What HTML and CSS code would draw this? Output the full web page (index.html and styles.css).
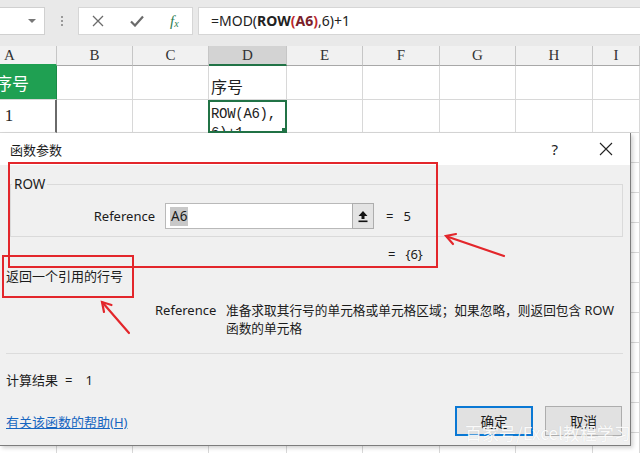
FILE: index.html
```html
<!DOCTYPE html>
<html lang="zh">
<head>
<meta charset="utf-8">
<title>函数参数</title>
<link rel="stylesheet" href="styles.css">
</head>
<body>
<div class="app">
  <header class="toolbar">
    <div class="namebox"><span class="caret"></span></div>
    <div class="grip"><i></i><i></i><i></i></div>
    <div class="fxbox">
      <svg class="ic-x" width="12" height="12" viewBox="0 0 12 12"><path d="M1 1L11 11M11 1L1 11" stroke="#6b6b6b" stroke-width="1.3" fill="none"/></svg>
      <svg class="ic-ok" width="14" height="12" viewBox="0 0 14 12"><path d="M1 6.5L5 10.5L13 1.5" stroke="#6b6b6b" stroke-width="2.2" fill="none"/></svg>
      <span class="fx">f<sub>x</sub></span>
    </div>
    <div class="formula">=MOD(<b>ROW</b><b class="paren">(</b><b class="ref">A6</b><b class="paren">)</b>,6)+1</div>
  </header>

  <div class="sheet">
    <div class="hd c-a">A</div><div class="hd">B</div><div class="hd">C</div><div class="hd hd-sel">D</div><div class="hd">E</div><div class="hd">F</div><div class="hd">G</div><div class="hd">H</div><div class="hd">I</div>

    <div class="cell r1 green"><span class="shift">序号</span></div><div class="cell r1"></div><div class="cell r1"></div><div class="cell r1 dtext1">序号</div><div class="cell r1"></div><div class="cell r1"></div><div class="cell r1"></div><div class="cell r1"></div><div class="cell r1"></div>

    <div class="cell r2 num">1</div><div class="cell r2"></div><div class="cell r2"></div><div class="cell r2 active"><span class="mono">ROW(A6),<br>6)+1</span><span class="handle"></span></div><div class="cell r2"></div><div class="cell r2"></div><div class="cell r2"></div><div class="cell r2"></div><div class="cell r2"></div>

    <div class="cell"></div><div class="cell"></div><div class="cell"></div><div class="cell"></div><div class="cell"></div><div class="cell"></div><div class="cell"></div><div class="cell"></div><div class="cell"></div>
    <div class="cell"></div><div class="cell"></div><div class="cell"></div><div class="cell"></div><div class="cell"></div><div class="cell"></div><div class="cell"></div><div class="cell"></div><div class="cell"></div>
    <div class="cell"></div><div class="cell"></div><div class="cell"></div><div class="cell"></div><div class="cell"></div><div class="cell"></div><div class="cell"></div><div class="cell"></div><div class="cell"></div>
    <div class="cell"></div><div class="cell"></div><div class="cell"></div><div class="cell"></div><div class="cell"></div><div class="cell"></div><div class="cell"></div><div class="cell"></div><div class="cell"></div>
    <div class="cell"></div><div class="cell"></div><div class="cell"></div><div class="cell"></div><div class="cell"></div><div class="cell"></div><div class="cell"></div><div class="cell"></div><div class="cell"></div>
    <div class="cell"></div><div class="cell"></div><div class="cell"></div><div class="cell"></div><div class="cell"></div><div class="cell"></div><div class="cell"></div><div class="cell"></div><div class="cell"></div>
    <div class="cell"></div><div class="cell"></div><div class="cell"></div><div class="cell"></div><div class="cell"></div><div class="cell"></div><div class="cell"></div><div class="cell"></div><div class="cell"></div>
    <div class="cell"></div><div class="cell"></div><div class="cell"></div><div class="cell"></div><div class="cell"></div><div class="cell"></div><div class="cell"></div><div class="cell"></div><div class="cell"></div>
    <div class="cell"></div><div class="cell"></div><div class="cell"></div><div class="cell"></div><div class="cell"></div><div class="cell"></div><div class="cell"></div><div class="cell"></div><div class="cell"></div>
    <div class="cell"></div><div class="cell"></div><div class="cell"></div><div class="cell"></div><div class="cell"></div><div class="cell"></div><div class="cell"></div><div class="cell"></div><div class="cell"></div>
    <div class="cell"></div><div class="cell"></div><div class="cell"></div><div class="cell"></div><div class="cell"></div><div class="cell"></div><div class="cell"></div><div class="cell"></div><div class="cell"></div>
  </div>

  <div class="dialog">
    <div class="titlebar">
      <span class="title">函数参数</span>
      <span class="help">?</span>
      <svg class="close" width="14" height="14" viewBox="0 0 14 14"><path d="M1 1L13 13M13 1L1 13" stroke="#222" stroke-width="1.1" fill="none"/></svg>
    </div>
    <div class="dbody">
      <fieldset class="group">
        <legend>ROW</legend>
        <div class="argrow">
          <span class="arglabel">Reference</span>
          <div class="input"><span class="sel">A6</span></div>
          <span class="pick"><svg width="12" height="13" viewBox="0 0 12 13"><path d="M6 1L1.5 6H4.5V9H7.5V6H10.5Z" fill="#111"/><rect x="1.5" y="10.5" width="9" height="1.6" fill="#111"/></svg></span>
          <span class="eq">=</span><span class="val">5</span>
        </div>
      </fieldset>
      <div class="resrow"><span class="eq">=</span><span class="val">{6}</span></div>
      <div class="summary">返回一个引用的行号</div>
      <div class="desc">
        <span class="dname">Reference</span>
        <span class="dtext">准备求取其行号的单元格或单元格区域；如果忽略，则返回包含 ROW<br>函数的单元格</span>
      </div>
      <div class="sep"></div>
      <div class="calc"><span>计算结果</span><span class="ceq">=</span><span class="cval">1</span></div>
      <div class="footer">
        <a class="helplink" href="#">有关该函数的帮助(H)</a>
        <div class="btns">
          <span class="btn btn-ok">确定</span>
          <span class="btn">取消</span>
        </div>
      </div>
    </div>
  </div>

  <div class="mark mark1"></div>
  <div class="mark mark2"></div>
  <svg class="arrows" width="640" height="453" viewBox="0 0 640 453">
    <g stroke="#e3262b" stroke-width="2.2" fill="none" stroke-linecap="round">
      <path d="M504 256L447 236.5"/>
      <path d="M453 244L446 236L456 234"/>
      <path d="M129 333L102.5 302.5"/>
      <path d="M104 312L102 302L111.5 305"/>
    </g>
  </svg>
  <div class="watermark">百家号/Excel教程学习</div>
</div>
</body>
</html>
```

FILE: styles.css
```css
* { box-sizing: border-box; }
html, body { margin: 0; padding: 0; }
body {
  width: 640px;
  height: 453px;
  overflow: hidden;
  background: #ffffff;
  font-family: "Noto Sans", "Noto Sans CJK SC", sans-serif;
}
.app {
  position: relative;
  width: 640px;
  height: 453px;
  overflow: hidden;
}

/* toolbar */
.toolbar {
  height: 46px;
  background: #e9e9e9;
  display: flex;
  align-items: flex-start;
  padding-top: 7px;
}
.namebox {
  width: 45px;
  height: 28px;
  background: #fff;
  border: 1px solid #d0d0d0;
  border-left: none;
  display: flex;
  align-items: center;
  justify-content: flex-end;
  padding-right: 8px;
}
.caret {
  width: 0; height: 0;
  border-left: 4px solid transparent;
  border-right: 4px solid transparent;
  border-top: 4px solid #777;
}
.grip {
  width: 33px;
  height: 28px;
  display: flex;
  flex-direction: column;
  align-items: center;
  justify-content: center;
  gap: 2px;
}
.grip i {
  display: block;
  width: 2px; height: 2px;
  background: #9a9a9a;
}
.fxbox {
  width: 115px;
  height: 28px;
  background: #fff;
  border: 1px solid #d6d6d6;
  display: flex;
  align-items: center;
  padding-left: 13px;
}
.ic-x { margin-right: 26px; }
.ic-ok { margin-right: 26px; }
.fx {
  font-family: "Liberation Serif", serif;
  font-style: italic;
  color: #2e7d52;
  font-size: 15px;
}
.fx sub { font-size: 10px; vertical-align: -1px; }
.formula {
  flex: 1;
  height: 28px;
  margin-left: 5px;
  background: #fff;
  border: 1px solid #d6d6d6;
  border-right: none;
  font-size: 14px;
  line-height: 26px;
  padding-left: 12px;
  color: #222;
}
.formula b { font-weight: 700; }
.formula .paren { color: #c0282d; }
.formula .ref { color: #7a1e2a; }

/* sheet */
.sheet {
  display: grid;
  grid-template-columns: 57px 76px 76px 78px 76px 77px 76px 77px 47px;
  grid-template-rows: 20px 34px 33px;
  grid-auto-rows: 30px;
}
.hd {
  background: #f1f1f1;
  border-right: 1px solid #c6c6c6;
  border-bottom: 1px solid #a8a8a8;
  font-family: "Liberation Serif", serif;
  font-size: 15px;
  color: #333;
  text-align: center;
  line-height: 19px;
}
.hd.c-a { padding-right: 37px; border-bottom: 2px solid #1e9f51; }
.hd-sel { background: #d3d3d3; border-bottom: 2px solid #217346; }
.cell {
  border-right: 1px solid #d8d8d8;
  border-bottom: 1px solid #d8d8d8;
  position: relative;
}
.green {
  background: #1fa052;
  color: #fff;
  font-family: "Noto Sans CJK SC", sans-serif;
  font-size: 17px;
  display: flex;
  align-items: center;
  border-right: 1px solid #1a8a46;
}
.shift { margin-left: -5px; }
.dtext1 {
  font-family: "Noto Sans CJK SC", sans-serif;
  font-size: 16px;
  color: #222;
  display: flex;
  align-items: flex-end;
  padding-left: 2px;
  padding-bottom: 1px;
}
.num {
  font-family: "Liberation Serif", serif;
  font-size: 17px;
  color: #222;
  text-align: center;
  padding-right: 37px;
  line-height: 32px;
  border-right: 2px solid #6a6a6a;
}
.active {
  border: 2px solid #217346;
  margin-left: -1px;
  overflow: hidden;
}
.mono {
  display: block;
  font-family: "Liberation Mono", monospace;
  font-size: 14px;
  line-height: 19px;
  color: #222;
  padding-left: 1px;
  padding-top: 3px;
  letter-spacing: -0.3px;
}
.handle {
  position: absolute;
  right: -2px;
  bottom: -2px;
  width: 5px;
  height: 5px;
  background: #217346;
}

/* dialog */
.dialog {
  position: absolute;
  left: 0;
  top: 133px;
  width: 631px;
  height: 313px;
  background: #f0f0f0;
  border-right: 1px solid #7d7d7d;
  border-bottom: 1px solid #7d7d7d;
  box-shadow: 2px 2px 4px rgba(0,0,0,0.18);
  font-size: 13px;
  color: #1b1b1b;
}
.titlebar {
  height: 32px;
  background: #ffffff;
  display: flex;
  align-items: center;
  padding-left: 10px;
}
.title { flex: 1; }
.help { font-size: 15px; margin-right: 41px; color: #222; }
.close { margin-right: 17px; }
.dbody {
  padding: 0 7px 0 6px;
}
.group {
  margin: 10px 0 0 4px;
  padding: 10px 0 7px 0;
  border: 1px solid #dadada;
}
.group legend {
  padding: 0 2px;
  margin-left: 1px;
  line-height: 18px;
  font-size: 13.5px;
}
.argrow {
  display: flex;
  align-items: center;
  height: 26px;
  padding-left: 82px;
}
.arglabel {
  width: 62px;
  text-align: right;
  white-space: nowrap;
}
.input {
  width: 187px;
  height: 26px;
  margin-left: 10px;
  background: #fff;
  border: 1px solid #b9b9b9;
  border-right: none;
  display: flex;
  align-items: center;
  padding-left: 4px;
}
.sel {
  background: #c8c8c8;
  padding: 0 1px;
  line-height: 19px;
  font-size: 13.5px;
}
.pick {
  width: 22px;
  height: 26px;
  background: #e3e3e3;
  border: 1px solid #adadad;
  display: flex;
  align-items: center;
  justify-content: center;
}
.argrow .eq { margin-left: 12px; }
.argrow .val { margin-left: 10px; }
.resrow {
  margin-top: 7px;
  height: 20px;
  line-height: 20px;
  padding-left: 382px;
}
.resrow .val { margin-left: 10px; }
.summary {
  margin-top: 2px;
  height: 20px;
  line-height: 20px;
}
.desc {
  margin-top: 15px;
  display: flex;
  padding-left: 149px;
  line-height: 18px;
}
.dname { width: 71px; flex: none; }
.dtext { white-space: nowrap; font-size: 12.7px; }
.sep {
  margin-top: 16px;
  border-top: 1px solid #dcdcdc;
}
.calc {
  margin-top: 16px;
  height: 20px;
  line-height: 20px;
  display: flex;
}
.ceq { margin-left: 7px; }
.cval { margin-left: 13px; }
.footer {
  margin-top: 16px;
  height: 30px;
  display: flex;
  align-items: center;
}
.helplink {
  flex: 1;
  color: #1565c0;
  text-decoration: underline;
}
.btns {
  display: flex;
  gap: 12px;
  margin-right: 1px;
}
.btn {
  width: 77px;
  height: 30px;
  background: #e1e1e1;
  border: 1px solid #adadad;
  display: flex;
  align-items: center;
  justify-content: center;
  font-size: 13.5px;
}
.btn-ok {
  width: 78px;
  border: 2px solid #0a78d4;
}

/* annotations */
.mark {
  position: absolute;
  border: 2px solid #e3262b;
}
.mark1 { left: 8px; top: 162px; width: 430px; height: 106px; }
.mark2 { left: 2px; top: 255px; width: 132px; height: 43px; }
.arrows {
  position: absolute;
  left: 0;
  top: 0;
  pointer-events: none;
}
.watermark {
  position: absolute;
  left: 465px;
  top: 422px;
  font-family: "Noto Sans CJK SC", sans-serif;
  font-size: 17px;
  line-height: 22px;
  color: rgba(255,255,255,0.92);
  text-shadow: 0 0 1px rgba(0,0,0,0.12);
  white-space: nowrap;
}
```
